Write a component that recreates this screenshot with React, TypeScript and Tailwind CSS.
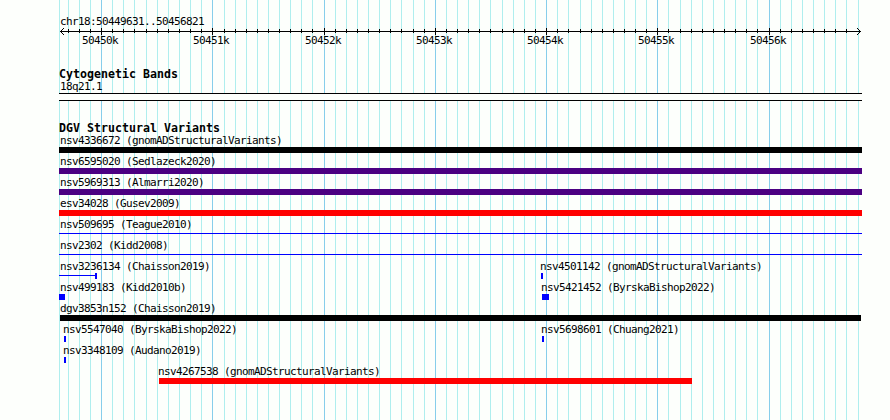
import clsx from 'clsx';

interface Feature {
  name: string;
  labelX: number;
  start: number;
  end: number;
  kind: 'bar' | 'line' | 'whisker';
  color: string;
}

const LEFT = 59;
const MAJOR = [101, 212, 324, 435, 546, 657, 769];
const GRID = [
  59, 68, 79, 90, 101, 112, 123, 134, 146, 157, 168, 179, 190, 201, 212, 224, 235, 246, 257, 268,
  279, 290, 301, 312, 324, 335, 346, 357, 368, 379, 390, 401, 413, 424, 435, 446, 457, 468, 479,
  490, 502, 513, 524, 535, 546, 557, 568, 580, 591, 602, 613, 624, 635, 646, 657, 668, 680, 691,
  702, 713, 724, 735, 746, 757, 769, 780, 791, 802, 813, 824, 835, 846, 858,
];

const ROWS: Feature[][] = [
  [{ name: 'nsv4336672 (gnomADStructuralVariants)', labelX: 60, start: 59, end: 862, kind: 'bar', color: 'bg-black' }],
  [{ name: 'nsv6595020 (Sedlazeck2020)', labelX: 60, start: 59, end: 862, kind: 'bar', color: 'bg-[#4b0082]' }],
  [{ name: 'nsv5969313 (Almarri2020)', labelX: 60, start: 59, end: 862, kind: 'bar', color: 'bg-[#4b0082]' }],
  [{ name: 'esv34028 (Gusev2009)', labelX: 60, start: 59, end: 862, kind: 'bar', color: 'bg-[#ff0000]' }],
  [{ name: 'nsv509695 (Teague2010)', labelX: 60, start: 59, end: 862, kind: 'line', color: 'bg-[#0000ff]' }],
  [{ name: 'nsv2302 (Kidd2008)', labelX: 60, start: 59, end: 862, kind: 'line', color: 'bg-[#0000ff]' }],
  [
    { name: 'nsv3236134 (Chaisson2019)', labelX: 60, start: 59, end: 97, kind: 'whisker', color: 'bg-[#0000ff]' },
    { name: 'nsv4501142 (gnomADStructuralVariants)', labelX: 540, start: 541, end: 543, kind: 'bar', color: 'bg-[#0000ff]' },
  ],
  [
    { name: 'nsv499183 (Kidd2010b)', labelX: 60, start: 59, end: 65, kind: 'bar', color: 'bg-[#0000ff]' },
    { name: 'nsv5421452 (ByrskaBishop2022)', labelX: 541, start: 542, end: 549, kind: 'bar', color: 'bg-[#0000ff]' },
  ],
  [{ name: 'dgv3853n152 (Chaisson2019)', labelX: 60, start: 60, end: 861, kind: 'bar', color: 'bg-black' }],
  [
    { name: 'nsv5547040 (ByrskaBishop2022)', labelX: 63, start: 64, end: 66, kind: 'bar', color: 'bg-[#0000ff]' },
    { name: 'nsv5698601 (Chuang2021)', labelX: 541, start: 542, end: 544, kind: 'bar', color: 'bg-[#0000ff]' },
  ],
  [{ name: 'nsv3348109 (Audano2019)', labelX: 63, start: 64, end: 66, kind: 'bar', color: 'bg-[#0000ff]' }],
  [{ name: 'nsv4267538 (gnomADStructuralVariants)', labelX: 158, start: 159, end: 692, kind: 'bar', color: 'bg-[#ff0000]' }],
];

const SMALL = 'text-[11px] leading-[13px] tracking-[-0.622px] whitespace-pre';
const HEADING = 'text-[11.6px] leading-[13px] font-bold tracking-[0.016px] whitespace-pre';

const Grid = () => (
  <svg className="absolute inset-0" width="890" height="420" shapeRendering="crispEdges">
    {GRID.map((x) => (
      <rect key={x} x={x} y="0" width="1" height="420" fill={MAJOR.includes(x) ? '#87ceeb' : '#afeeee'} />
    ))}
  </svg>
);

const Ruler = () => (
  <svg className="block h-[8px] w-[890px]" viewBox="0 0 890 8" shapeRendering="crispEdges">
    <rect x="60" y="3" width="801" height="1" />
    {GRID.filter((x) => x > 60 && x < 858).map((x) =>
      MAJOR.includes(x) ? (
        <rect key={x} x={x} y="0" width="1" height="7" />
      ) : (
        <rect key={x} x={x} y="1" width="1" height="4" />
      ),
    )}
    {[1, 2, 3].map((d) => (
      <g key={d}>
        <rect x={60 + d} y={3 - d} width="1" height="1" />
        <rect x={60 + d} y={3 + d} width="1" height="1" />
        <rect x={860 - d} y={3 - d} width="1" height="1" />
        <rect x={860 - d} y={3 + d} width="1" height="1" />
      </g>
    ))}
  </svg>
);

const Glyph = ({ feature }: { feature: Feature }) => {
  const { kind, color, start, end } = feature;
  return (
    <div
      className="flex h-[6px] items-center"
      style={{ marginLeft: start - feature.labelX, width: end - start }}
    >
      {kind === 'bar' && <div className={clsx('h-full w-full', color)} />}
      {kind === 'line' && <div className={clsx('mb-px h-px w-full', color)} />}
      {kind === 'whisker' && (
        <>
          <div className={clsx('mb-px h-px flex-1', color)} />
          <div className={clsx('h-full w-[2px]', color)} />
        </>
      )}
    </div>
  );
};

const Row = ({ features }: { features: Feature[] }) => (
  <div className="grid h-[21px]">
    {features.map((feature) => (
      <div
        key={feature.name}
        className="col-start-1 row-start-1 w-max"
        style={{ marginLeft: feature.labelX }}
      >
        <p className={SMALL}>{feature.name}</p>
        <Glyph feature={feature} />
      </div>
    ))}
  </div>
);

const App = () => (
  <div className="relative h-[420px] w-[890px] overflow-hidden bg-[#fdfffc] font-['DejaVu_Sans_Mono',monospace] text-black">
    <Grid />
    <div className="relative pt-[15px]">
      <p className={clsx(SMALL, 'ml-[60px]')}>chr18:50449631..50456821</p>
      <Ruler />
      <div className="-mt-[2px] flex h-[13px]">
        {MAJOR.map((x, i) => (
          <div
            key={x}
            className="w-0 shrink-0"
            style={{ marginLeft: i === 0 ? x - 19 : x - (MAJOR[i - 1] ?? 0) }}
          >
            <p className={SMALL}>{50450 + i}k</p>
          </div>
        ))}
      </div>

      <div className="pt-[21px]">
        <h2 className={HEADING} style={{ marginLeft: LEFT }}>
          Cytogenetic Bands
        </h2>
        <p className={clsx(SMALL, '-mt-px ml-[60px]')}>18q21.1</p>
        <div className="ml-[59px] h-[8px] w-[803px] border-y border-black bg-[#fdfffc]" />
      </div>

      <div className="pt-[21px]">
        <h2 className={clsx(HEADING, '-mb-px')} style={{ marginLeft: LEFT }}>
          DGV Structural Variants
        </h2>
        {ROWS.map((features) => (
          <Row key={features[0]?.name} features={features} />
        ))}
      </div>
    </div>
  </div>
);

export default App;
